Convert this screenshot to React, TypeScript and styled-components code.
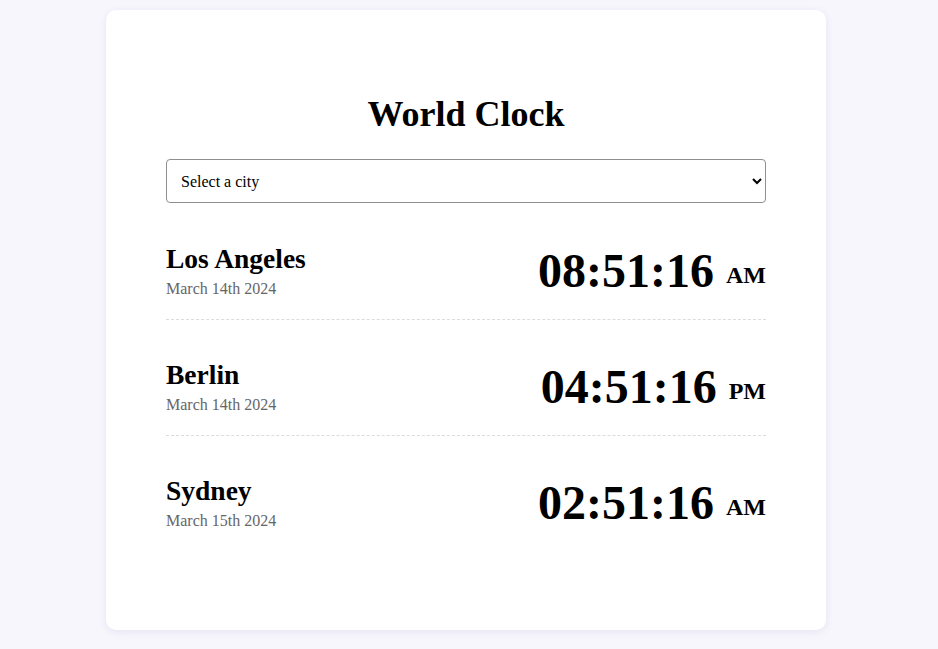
import React from "react";
import styled, { createGlobalStyle } from "styled-components";

const GlobalStyle = createGlobalStyle`
  html, body {
    margin: 0;
    padding: 0;
    background: #f7f6fd;
    font-family: "Liberation Serif", "Times New Roman", serif;
    color: #000;
  }
  body {
    padding: 10px 0 19px;
  }
`;

const Card = styled.main`
  box-sizing: border-box;
  width: 720px;
  margin: 0 auto 0 106px;
  background: #ffffff;
  border-radius: 10px;
  box-shadow: 0 2px 8px rgba(40, 30, 90, 0.08);
  padding: 60px;
`;

const Title = styled.h1`
  font-size: 36px;
  font-weight: bold;
  text-align: center;
  margin: 23px 0 24px;
`;

const Select = styled.select`
  display: block;
  box-sizing: border-box;
  width: 100%;
  height: 44px;
  padding: 0 10px;
  margin: 0 0 20px;
  font-family: "Liberation Serif", "Times New Roman", serif;
  font-size: 16px;
  color: #000;
  background: #fff;
  border: 1px solid #8f8f8f;
  border-radius: 4px;
`;

const Row = styled.div<{ $last?: boolean }>`
  display: flex;
  align-items: center;
  justify-content: space-between;
  padding: 20px 0 21px;
  margin-bottom: 19px;
  border-bottom: ${(p) => (p.$last ? "none" : "1px dashed #dcdcdc")};
`;

const Place = styled.div`
  display: flex;
  flex-direction: column;
`;

const City = styled.div`
  font-size: 27.5px;
  font-weight: bold;
  margin-bottom: 5px;
`;

const DateText = styled.div`
  font-size: 16px;
  color: #666;
`;

const Time = styled.div`
  font-size: 48px;
  font-weight: bold;
  white-space: nowrap;
`;

const Period = styled.span`
  font-size: 24px;
  vertical-align: 4px;
`;

const clocks = [
  { city: "Los Angeles", date: "March 14th 2024", time: "08:51:16", period: "AM" },
  { city: "Berlin", date: "March 14th 2024", time: "04:51:16", period: "PM" },
  { city: "Sydney", date: "March 15th 2024", time: "02:51:16", period: "AM" },
];

export default function App() {
  return (
    <>
      <GlobalStyle />
      <Card>
        <Title>World Clock</Title>
        <Select defaultValue="">
          <option value="">Select a city</option>
          <option value="la">Los Angeles</option>
          <option value="berlin">Berlin</option>
          <option value="sydney">Sydney</option>
        </Select>
        {clocks.map((c, i) => (
          <Row key={c.city} $last={i === clocks.length - 1}>
            <Place>
              <City>{c.city}</City>
              <DateText>{c.date}</DateText>
            </Place>
            <Time>
              {c.time} <Period>{c.period}</Period>
            </Time>
          </Row>
        ))}
      </Card>
    </>
  );
}
